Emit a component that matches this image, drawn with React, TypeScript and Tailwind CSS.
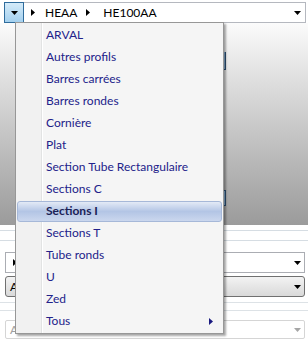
import React from "react";

const DownTri = ({ color = "#000" }: { color?: string }) => (
  <svg width="7" height="4" viewBox="0 0 7 4" className="block">
    <polygon points="0,0 7,0 3.5,4" fill={color} />
  </svg>
);

const RightTri = ({ color = "#000" }: { color?: string }) => (
  <svg width="4" height="7" viewBox="0 0 4 7" className="block">
    <polygon points="0,0 4,3.5 0,7" fill={color} />
  </svg>
);

const items = [
  "ARVAL",
  "Autres profils",
  "Barres carrées",
  "Barres rondes",
  "Cornière",
  "Plat",
  "Section Tube Rectangulaire",
  "Sections C",
  "Sections I",
  "Sections T",
  "Tube ronds",
  "U",
  "Zed",
  "Tous",
];

export default function App() {
  return (
    <div
      className="relative h-[342px] w-[308px] overflow-hidden bg-white text-[12px]"
      style={{ fontFamily: "Lato, 'Noto Sans', sans-serif" }}
    >
      {/* top breadcrumb combo */}
      <div className="pl-[4px] pt-[2px]">
        <div className="flex h-[21px] w-[302px] items-center border border-[#b5b8bf] bg-white">
          <div className="-my-px -ml-px flex h-[21px] w-[20px] items-center justify-center border border-[#2f6c9c] bg-gradient-to-b from-[#d4ebf9] to-[#a4d0ee]">
            <DownTri />
          </div>
          <div className="ml-[7px]">
            <RightTri />
          </div>
          <span className="ml-[10px] text-black">HEAA</span>
          <div className="ml-[9px]">
            <RightTri />
          </div>
          <span className="ml-[13px] text-black">HE100AA</span>
          <div className="ml-auto mr-[4px]">
            <DownTri />
          </div>
        </div>
      </div>

      {/* gradient panel */}
      <div className="h-[202px] bg-gradient-to-b from-[#fbfbfb] to-[#9b9b9b]" />

      {/* lower form */}
      <div className="mt-[5px] h-[10px] border-t border-[#d6dde3]" />
      <div className="h-px bg-[#d6dde3]" />

      <div className="ml-[5px] mt-[11px] flex h-[21px] w-[300px] items-center border border-[#abadb3] bg-white px-[7px]">
        <RightTri />
        <div className="ml-auto -mr-[4px]">
          <DownTri />
        </div>
      </div>

      <div className="ml-[5px] mt-[3px] flex h-[21px] w-[300px] items-center rounded-[3px] border border-[#707070] bg-gradient-to-b from-[#f3f3f3] to-[#d9d9d9] px-[4px]">
        <span className="text-black">A</span>
        <div className="ml-auto mr-[-1px]">
          <DownTri />
        </div>
      </div>

      <div className="mt-[5px] h-[8px] border-t border-[#dde2e6]" />
      <div className="h-px bg-[#dde2e6]" />

      <div className="ml-[5px] mt-[9px] flex h-[19px] w-[300px] items-center rounded-[2px] border border-[#d5d5d5] bg-white px-[4px]">
        <span className="text-[#a0a0a0]">A</span>
        <div className="ml-auto mr-[-1px]">
          <DownTri color="#a6a6a6" />
        </div>
      </div>

      {/* underlying blue marks peeking past menu */}
      <div className="absolute left-[223px] top-[52px] h-[18px] w-[3px] border-b border-r border-[#2c4f72] bg-[#8db6da]" />
      <div className="absolute left-[223px] top-[190px] h-[16px] w-[3px] border-r border-t border-b border-[#2c4f72] bg-[#8db6da]" />

      {/* dropdown menu */}
      <div className="absolute left-[15px] top-[22px] w-[209px] border border-[#979797] bg-[linear-gradient(to_right,#f1f1f1_0px,#f1f1f1_25px,#e2e3e3_25px,#e2e3e3_26px,#ffffff_26px,#ffffff_27px,#f5f5f5_27px)] py-px shadow-[2px_2px_2px_rgba(0,0,0,0.35)]">
        {items.map((label) => {
          const selected = label === "Sections I";
          return (
            <div key={label} className="flex h-[22px] items-center px-px">
              <div
                className={
                  selected
                    ? "flex h-[21px] w-full items-center rounded-[3px] border border-[#a6b8d8] bg-gradient-to-b from-[#e3eaf6] via-[#b3c5e5] to-[#cbd7ee] pl-[28px] pr-[8px] font-bold text-[#1a2256]"
                    : "flex h-[21px] w-full items-center border border-transparent pl-[28px] pr-[8px] text-[#22228a]"
                }
              >
                <span>{label}</span>
                {label === "Tous" && (
                  <div className="ml-auto">
                    <RightTri color="#1a1a80" />
                  </div>
                )}
              </div>
            </div>
          );
        })}
      </div>
    </div>
  );
}
